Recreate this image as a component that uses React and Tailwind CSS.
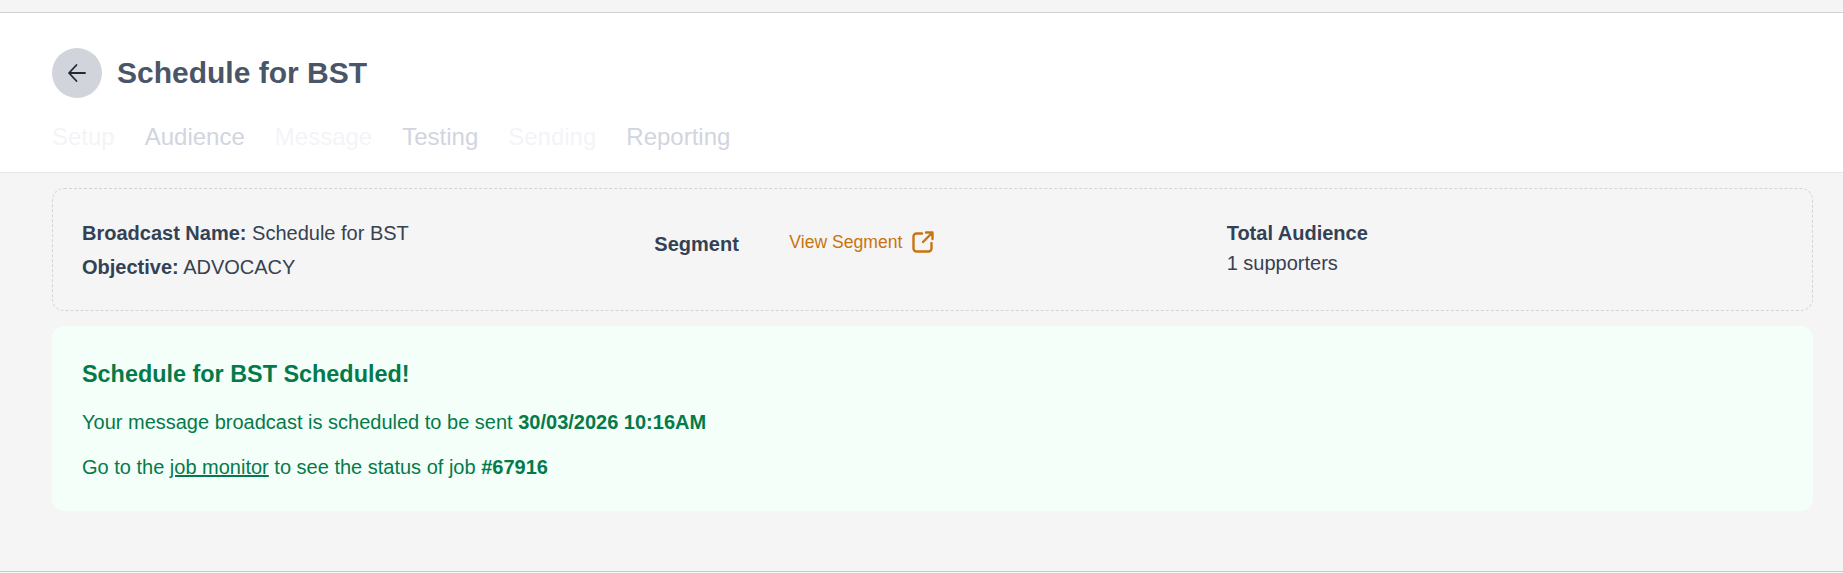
import React from "react";

function Tab({ label, cls }) {
  return <span className={cls}>{label}</span>;
}

export default function App() {
  return (
    <div className="flex h-[573px] flex-col bg-[#f5f5f5] font-['Liberation_Sans',Arial,sans-serif] text-[#374151]">
      <div className="h-3 border-b border-[#d1d1d1] box-content" />
      <header className="h-[160px] border-b border-[#e5e7eb] bg-white px-[52px] pt-[35px]">
        <div className="flex items-center gap-[15px]">
          <button className="flex h-[50px] w-[50px] items-center justify-center rounded-full bg-[#d1d5db]">
            <svg width="24" height="24" viewBox="0 0 24 24" fill="none" stroke="#1f2937" strokeWidth="1.8" strokeLinecap="round" strokeLinejoin="round">
              <path d="M20 12H4M11.5 4 4 12l7.5 8" />
            </svg>
          </button>
          <h1 className="text-3xl font-bold text-[#4a5568]">Schedule for BST</h1>
        </div>
        <nav className="mt-[23px] flex gap-[30px] text-2xl leading-8">
          <Tab label="Setup" cls="text-[#f3f4f8]" />
          <Tab label="Audience" cls="text-[#d1d5e0]" />
          <Tab label="Message" cls="text-[#f3f4f8]" />
          <Tab label="Testing" cls="text-[#d1d5e0]" />
          <Tab label="Sending" cls="text-[#f3f4f8]" />
          <Tab label="Reporting" cls="text-[#d1d5e0]" />
        </nav>
      </header>

      <main className="flex flex-1 flex-col gap-[15px] pl-[52px] pr-[30px] pt-[15px]">
        <section className="grid h-[123px] grid-cols-3 items-start gap-x-4 rounded-xl border border-dashed border-[#d1d5db] px-[29px] pt-[27px]">
          <div className="text-xl leading-[34px] text-[#374151]">
            <div><b className="text-[#334155]">Broadcast Name:</b> Schedule for BST</div>
            <div><b className="text-[#334155]">Objective:</b> ADVOCACY</div>
          </div>
          <div className="mt-[12px] flex items-start">
            <b className="mt-[2px] w-[135px] text-xl text-[#334155]">Segment</b>
            <a className="flex h-7 items-center gap-[10px] text-[17.6px] text-[#c87410]">
              View Segment
              <svg width="22" height="22" viewBox="0 0 22 22" fill="none" stroke="#c87410" strokeWidth="2.4" strokeLinecap="round" strokeLinejoin="round">
                <path d="M10 2.5H4.5a3 3 0 0 0-3 3v12a3 3 0 0 0 3 3h12a3 3 0 0 0 3-3V12M14 1.5h6.5V8M20 2l-9 9" />
              </svg>
            </a>
          </div>
          <div className="mt-[2px] text-xl leading-[30px] text-[#374151]">
            <b className="block text-[#334155]">Total Audience</b>
            1 supporters
          </div>
        </section>

        <section className="h-[185px] rounded-xl bg-[#f4fff9] px-[30px] pt-[34px] text-[#047a4b]">
          <h2 className="text-[23.4px] font-bold leading-7">Schedule for BST Scheduled!</h2>
          <p className="mt-5 text-xl leading-7">
            Your message broadcast is scheduled to be sent <b>30/03/2026 10:16AM</b>
          </p>
          <p className="mt-[17px] text-xl leading-7">
            Go to the <a className="underline">job monitor</a> to see the status of job <b>#67916</b>
          </p>
        </section>
      </main>
      <div className="mb-px border-b border-[#c9c9c9]" />
    </div>
  );
}
